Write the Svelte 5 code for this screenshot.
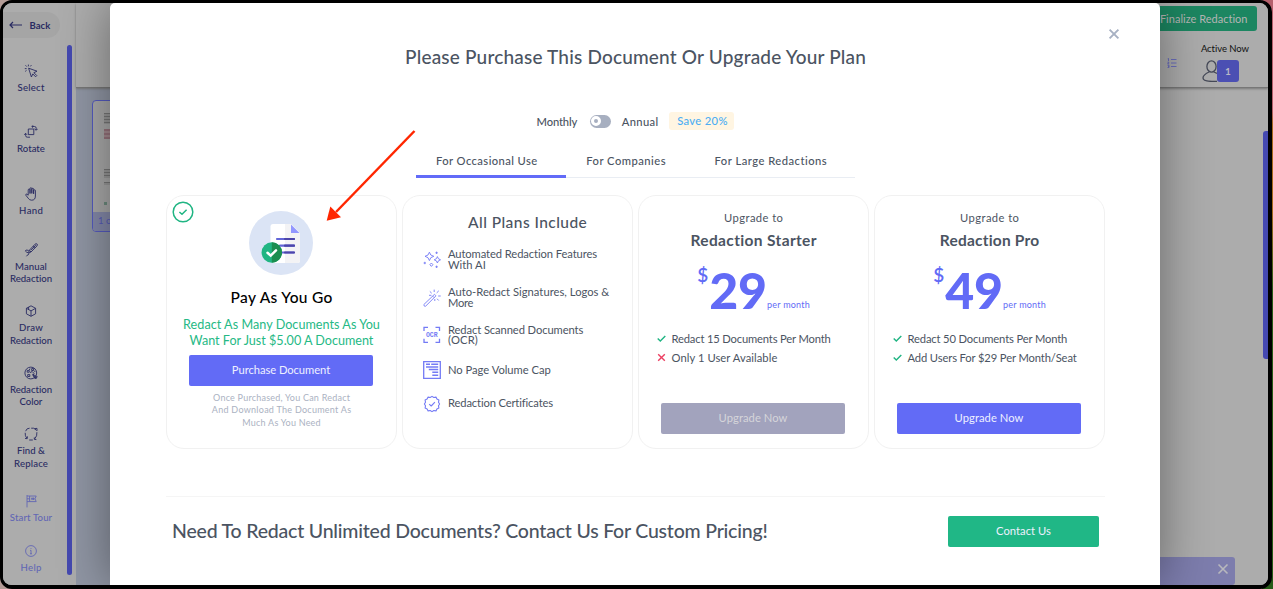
<script>
  // Tracks a label so that its text spans the given width.
  function fit(node, width) {
    const natural = node.getBoundingClientRect().width;
    const spacing = (width + 0.8 - natural) / (node.textContent.length - 1);
    node.style.letterSpacing = `${spacing}px`;
    node.style.marginRight = `${-spacing}px`;
  }

  const tools = [
    { icon: 'select', lines: [['Select', 26]] },
    { icon: 'rotate', lines: [['Rotate', 27]] },
    { icon: 'hand', lines: [['Hand', 23]] },
    { icon: 'manual', lines: [['Manual', 31], ['Redaction', 41.5]] },
    { icon: 'draw', lines: [['Draw', 23], ['Redaction', 41.5]] },
    { icon: 'color', lines: [['Redaction', 41.5], ['Color', 22]] },
    { icon: 'find', lines: [['Find &', 27], ['Replace', 33]] },
    { icon: 'tour', lines: [['Start Tour', 41.5]], soft: true },
    { icon: 'help', lines: [['Help', 20]], soft: true }
  ];

  const tabs = [
    { label: 'For Occasional Use', w: 100.5, active: true },
    { label: 'For Companies', w: 78.5 },
    { label: 'For Large Redactions', w: 111.5 }
  ];

  const features = [
    { icon: 'sparkles', lines: [['Automated Redaction Features', 148.5], ['With AI', 37]] },
    { icon: 'wand', lines: [['Auto-Redact Signatures, Logos &', 160.5], ['More', 24.5]] },
    { icon: 'ocr', lines: [['Redact Scanned Documents', 134.5], ['(OCR)', 29]] },
    { icon: 'page', lines: [['No Page Volume Cap', 102]] },
    { icon: 'seal', lines: [['Redaction Certificates', 104.5]] }
  ];

  const plans = [
    {
      name: 'Redaction Starter', w: 125.5, price: '29', disabled: true,
      points: [['Redact 15 Documents Per Month', 158.5, true], ['Only 1 User Available', 105, false]]
    },
    {
      name: 'Redaction Pro', w: 99, price: '49', disabled: false,
      points: [['Redact 50 Documents Per Month', 159, true], ['Add Users For $29 Per Month/Seat', 168.5, true]]
    }
  ];
</script>

{#snippet t(text, w)}<span class="t" use:fit={w}>{text}</span>{/snippet}

{#snippet toolIcon(name)}
  <svg class="tool-icon" viewBox="0 0 14 14">
    {#if name === 'select'}
      <path d="M4.6 4.2 L13 7.2 L9.9 8.7 L12.8 11.6 L11.6 12.8 L8.8 9.9 L7.4 13 Z" /><path d="M4.4 .6 V2.3 M.8 4.6 H2.6 M1.5 1.3 L2.8 2.6 M7.4 1.1 L6.4 2.4 M1.2 7.4 L2.5 6.4" />
    {:else if name === 'rotate'}
      <path d="M4.3 4 H9.8 V9.6 H4.3 Z M8 1.5 H10.5 Q12.2 1.5 12.2 3.2 V5 M10.6 3.8 L12.2 5.3 L13.7 3.8 M9 .3 L7.8 1.5 L9 2.7 M6 12.2 H3.3 Q1.6 12.2 1.6 10.5 V8.5 M.2 9.8 L1.6 8.3 L3 9.8" />
    {:else if name === 'hand'}
      <path d="M4.2 8.2 V3 Q4.2 2 5.1 2 Q6 2 6 3 V6.5 V1.7 Q6 .7 6.9 .7 Q7.8 .7 7.8 1.7 V6.4 V2.2 Q7.8 1.3 8.7 1.3 Q9.6 1.3 9.6 2.2 V6.8 V3.7 Q9.6 2.8 10.5 2.8 Q11.4 2.8 11.4 3.7 V9 Q11.4 13.2 7.6 13.2 Q5.4 13.2 4.2 11.2 L1.8 8.2 Q1.5 6.9 2.8 7.1 Z" />
    {:else if name === 'manual'}
      <path d="M5.2 7.4 L11 1.2 Q12.3 .3 13.1 1 Q13.7 1.8 12.9 3 L7 9 L4.6 9.6 Z M9.3 3 L11.2 4.9 M6.8 7.3 L11.8 2.2 M5.2 7.4 L7 9 M4.6 7.4 Q1.2 6.3 1.4 8.1 Q1.8 9 4.3 9.8 Q5.9 11 4.2 11.8 Q2.8 12.1 2.4 13.3" />
    {:else if name === 'draw'}
      <path d="M7 1.8 L11.6 4.3 V9.8 L7 12.3 L2.4 9.8 V4.3 Z M2.4 4.3 L7 6.9 L11.6 4.3 M7 6.9 V12.2 M4.6 3 V5.5" />
    {:else if name === 'color'}
      <circle cx="6.8" cy="7" r="5.9" /><path d="M3.2 4.4 H5.2 V6.2 H3.2 Z M7.7 2.6 H9.6 V4.5 H7.7 Z M3.7 8.6 H5.8 V10.5 H3.7 Z M6 6.6 L8.2 5.5 L10 7.4 L9.2 9.5 L12.7 12.5 M8.6 8.4 L13.4 10.8 L11 12.8 Z M6 2.5 L5.3 4 M10.8 4.7 V6" />
    {:else if name === 'find'}
      <path d="M5.6 1.2 Q2.6 1 1.6 4.2 M1.2 5.8 Q.9 9 2.8 11.2 M1 11.4 L3.2 11.7 L3.5 9.4 M5.2 13 H8.8 M7.2 1.2 H9.5 Q11 1.6 12.5 3.6 M10.6 1.6 L13 1.4 V3.8 M12.9 5.2 Q13.4 9 10.6 12 M12.4 12.6 L10.3 12.4 V10.4" />
    {:else if name === 'tour'}
      <path d="M3 1 V13.4 M3 2 H12.2 L11 4.8 L12.2 7.6 H3 M5.6 2 V7.6 M8.1 3.5 V6 M9.6 3.5 V6 M3 4.8 H5.6 M7 4.8 H10.6" />
    {:else}
      <circle cx="7" cy="7" r="5.4" /><path d="M7 6.3 V9.8 M7 4 V4.8 M6.1 6.4 H7 M6 9.8 H8" />
    {/if}
  </svg>
{/snippet}

{#snippet featureIcon(name)}
  <svg class="feature-icon" viewBox="0 0 18 18">
    {#if name === 'sparkles'}
      <path d="M6.4 1.2 Q7 4.8 10.8 5.3 Q7 5.9 6.4 9.6 Q5.8 5.9 2 5.3 Q5.8 4.8 6.4 1.2 Z M14.4 5.6 Q14.8 8.2 17.5 8.8 Q14.8 9.3 14.4 12 Q14 9.3 11.2 8.8 Q14 8.2 14.4 5.6 Z M8.4 12 L9.9 13.7 L8.4 15.4 L6.9 13.7 Z M13.6 .6 V3 M12.4 1.8 H14.8 M1.8 10.8 V13.2 M.6 12 H3 M13.6 14.6 V17 M12.4 15.8 H14.8" />
    {:else if name === 'wand'}
      <path d="M.8 15.6 L11.5 5.3 L13 6.8 L2.6 17.2 Q1.1 17.9 .8 15.6 Z M9.6 7.1 L11.1 8.6 M11.2 .6 V3 M6.8 2.4 L8.7 4.2 M6 6.3 H8.4 M15.8 1.8 L13.7 3.9 M15.2 7 H17.7 M14 9.7 L15.7 11.5 M11.8 10 V12" />
    {:else if name === 'ocr'}
      <path d="M1 5 V1.4 H5 M12.5 1.4 H16.5 V5 M16.5 12.8 V16.4 H12.5 M5 16.4 H1 V12.8" stroke-width="1.3" />
      <text x="8.8" y="11.3" text-anchor="middle">OCR</text>
    {:else if name === 'page'}
      <path d="M.7 .7 H17.3 V17.3 H.7 Z" stroke-width="1.3" /><path d="M3 3.3 H7 M8.2 3.3 H15.2 M3 6 H15.2 M5.8 8.6 H15.2 M9.3 11.3 H15.2 M9.3 14.2 H15.2" stroke-width="1.5" />
    {:else}
      <path d="M9 1.4 L10.8 2.5 L13 2.1 L13.9 4.1 L15.9 5.1 L15.5 7.2 L16.6 9 L15.5 10.8 L15.9 13 L13.9 13.9 L13 15.9 L10.8 15.5 L9 16.6 L7.2 15.5 L5.1 15.9 L4.1 13.9 L2.1 13 L2.5 10.8 L1.4 9 L2.5 7.2 L2.1 5.1 L4.1 4.1 L5.1 2.1 L7.2 2.5 Z M6.2 9.2 L8.2 11 L11.9 7.2" stroke-width="1.1" stroke-linejoin="round" />
    {/if}
  </svg>
{/snippet}

<div class="desktop">
  <div class="window">
    <aside class="sidebar">
      <div class="back">
        <svg width="14" height="8" viewBox="0 0 14 8"><path d="M13 4 H1 M4 1 L1 4 L4 7" /></svg>
        {@render t('Back', 20)}
      </div>
      <div class="tools">
        {#each tools as tool}
          <div class="tool {tool.icon}" class:soft={tool.soft}>
            {@render toolIcon(tool.icon)}
            {#each tool.lines as [text, w]}
              <div class="tool-line">{@render t(text, w)}</div>
            {/each}
          </div>
        {/each}
      </div>
      <div class="side-scroll"></div>
    </aside>

    <main class="main">
      <header class="topbar">
        <div class="finalize">{@render t('Finalize Redaction', 87)}</div>
        <div class="status">
          <svg class="list" width="10" height="10" viewBox="0 0 10 10"><path d="M4 1.5 H9.5 M4 5 H9.5 M4 8.5 H9.5 M1.5 .3 V3 M.7 .8 H1.5 M.5 4.2 H2 L.7 5.8 H2.2 M.5 7.2 H2 V9.6 H.5 M1 8.4 H2" /></svg>
          <div class="active-now">
            <div>{@render t('Active Now', 47.5)}</div>
            <div class="users">
              <svg width="15" height="22" viewBox="0 0 15 22"><ellipse cx="9.5" cy="6.5" rx="4.6" ry="5.7" /><path d="M7 12 Q1 14.8 1 18 Q1 21.4 10 21.4 H15 M12 12 L15 13.5" /></svg>
              <span class="badge">1</span>
            </div>
          </div>
        </div>
      </header>
      <section class="canvas">
        <div class="strip">
          <div class="thumb">
            <div class="thumb-page">
              <i class="ink a"></i><i class="ink b"></i><i class="ink c"></i><i class="ink d"></i><i class="ink e"></i>
            </div>
            <div class="thumb-label">1 of 1</div>
          </div>
        </div>
        <div class="pages">
          <div class="page-scroll"></div>
          <div class="toast">
            <svg width="12" height="12" viewBox="0 0 12 12"><path d="M1.5 1.5 L10.5 10.5 M10.5 1.5 L1.5 10.5" /></svg>
          </div>
        </div>
      </section>
    </main>

    <div class="modal">
      <svg class="close" width="12" height="12" viewBox="0 0 12 12"><path d="M1.6 1.6 L10.4 10.4 M10.4 1.6 L1.6 10.4" /></svg>
      <h1>{@render t('Please Purchase This Document Or Upgrade Your Plan', 460)}</h1>

      <div class="billing">
        {@render t('Monthly', 40)}
        <span class="switch"><span class="knob"></span></span>
        {@render t('Annual', 35.5)}
        <span class="save">{@render t('Save 20%', 49.5)}</span>
      </div>

      <nav class="tabs">
        {#each tabs as tab}
          <div class="tab" class:active={tab.active}>{@render t(tab.label, tab.w)}</div>
        {/each}
      </nav>

      <div class="cards">
        <div class="card payg">
          <svg class="picked" width="22" height="22" viewBox="0 0 22 22"><circle cx="11" cy="11" r="9.8" /><path d="M7.4 11 L10 13.3 L14.6 8.8" /></svg>
          <svg class="doc" width="64" height="64" viewBox="0 0 64 64">
            <circle cx="32" cy="32" r="32" fill="#dbe4f5" />
            <path d="M24 13 H42 L51 22 V49.5 Q51 52 48.5 52 H24 Q21.5 52 21.5 49.5 V15.5 Q21.5 13 24 13 Z" fill="#fff" />
            <path d="M36 13 H42 L51 22 V49.5 Q51 52 48.5 52 H36 Z" fill="#f3f3f5" />
            <path d="M42 13.5 L50.5 22 H42 Z" fill="#9297ff" />
            <path d="M28 28 H45 M31 34.7 H45 M31 41.5 H45" stroke="#6366d8" stroke-width="2.2" stroke-linecap="round" />
            <path d="M36 28 H45 M36 34.7 H45 M36 41.5 H45" stroke="#4c45aa" stroke-width="2.2" stroke-linecap="round" />
            <circle cx="22.8" cy="41.5" r="10.2" fill="#20b583" />
            <path d="M22.8 31.3 A10.2 10.2 0 0 1 22.8 51.7 Z" fill="#1b8e50" />
            <path d="M18.5 41.8 L21.7 44.6 L27 39.3" fill="none" stroke="#fff" stroke-width="2.5" stroke-linecap="round" />
          </svg>
          <h2>{@render t('Pay As You Go', 101)}</h2>
          <div class="pitch">
            <div>{@render t('Redact As Many Documents As You', 196)}</div>
            <div>{@render t('Want For Just $5.00 A Document', 183)}</div>
          </div>
          <div class="btn">{@render t('Purchase Document', 97.5)}</div>
          <div class="note">
            <div>{@render t('Once Purchased, You Can Redact', 136)}</div>
            <div>{@render t('And Download The Document As', 138.5)}</div>
            <div>{@render t('Much As You Need', 77.5)}</div>
          </div>
        </div>

        <div class="card includes">
          <h3>{@render t('All Plans Include', 118)}</h3>
          {#each features as f}
            <div class="feature" class:single={f.lines.length === 1}>
              {@render featureIcon(f.icon)}
              <div>
                {#each f.lines as [text, w]}<div class="feature-line">{@render t(text, w)}</div>{/each}
              </div>
            </div>
          {/each}
        </div>

        {#each plans as plan}
          <div class="card plan">
            <div class="to">{@render t('Upgrade to', 58)}</div>
            <h4>{@render t(plan.name, plan.w)}</h4>
            <div class="price">
              <span class="dollar">$</span><span class="amount">{@render t(plan.price, 57)}</span><span class="per">{@render t('per month', 42)}</span>
            </div>
            <div class="points">
              {#each plan.points as [text, w, ok]}
                <div class="point">
                  <svg width="9" height="9" viewBox="0 0 9 9" class:no={!ok}>
                    {#if ok}<path d="M.7 4.5 L3.3 7.1 L8.3 2" />{:else}<path d="M1.2 1.2 L7.8 7.8 M7.8 1.2 L1.2 7.8" />{/if}
                  </svg>
                  {@render t(text, w)}
                </div>
              {/each}
            </div>
            <div class="btn" class:disabled={plan.disabled}>{@render t('Upgrade Now', 68)}</div>
          </div>
        {/each}
      </div>

      <footer>
        <div class="contact">{@render t('Need To Redact Unlimited Documents? Contact Us For Custom Pricing!', 595)}</div>
        <div class="btn green">{@render t('Contact Us', 54)}</div>
      </footer>
    </div>

    <svg class="arrow" width="92" height="94" viewBox="0 0 92 94">
      <path d="M89.5 2 L11 83" stroke="#ff2600" stroke-width="2.5" />
      <path d="M1.7 91.7 L5.3 77.5 L16 88.3 Z" fill="#ff2600" />
    </svg>
  </div>
</div>

<style>
  :global(body) { margin: 0; overflow: hidden; }
  * { box-sizing: border-box; }
  .desktop {
    width: 1273px; height: 589px;
    background: linear-gradient(90deg, #b39b96 0 1262px, transparent 1262px),
      linear-gradient(#b5606c 0 110px, #a86a1c 125px 210px, #265b17 290px);
    font-family: Lato, "Noto Sans", sans-serif;
    font-size: 11.2px;
    color: #4b5462;
  }
  .window {
    position: relative;
    display: flex;
    width: 1272px; height: 589px;
    border: solid #000; border-width: 3px 4px 4px 3px;
    border-radius: 12px;
    overflow: hidden;
    background: #aaa;
  }
  svg { display: block; fill: none; flex: none; }
  .t { display: inline-block; white-space: nowrap; }
  h1, h2, h3, h4 { margin: 0; font-weight: 500; }

  .sidebar { display: grid; grid-template: 42px 1fr / 56px 1fr; width: 73px; background: #acacac; color: #292b62; }
  .back { grid-column: 1 / 3; display: flex; align-items: center; gap: 7px; width: 57px; height: 26px; margin-top: 9px; padding-left: 5.5px; border-radius: 0 13px 13px 0; background: #a5a5a5; font-size: 9.5px; font-weight: 700; }
  .back svg { stroke: #292b62; stroke-width: 1.2; }
  .tools { padding-top: 18.5px; }
  .tool { height: 61.6px; display: flex; flex-direction: column; align-items: center; font-size: 9.6px; font-weight: 500; line-height: 12.3px; }
  .tool.hand { height: 56px; }
  .tool.find { height: 66.8px; }
  .tool.soft { height: 50px; color: #6267b4; }
  .tool-icon { width: 14px; height: 14px; margin-bottom: 4px; stroke: currentColor; stroke-width: .9; }
  .side-scroll { width: 5px; height: 530px; margin-left: 8px; border-radius: 3px; background: #4549b0; }

  .main { flex: 1; display: flex; flex-direction: column; }
  .topbar { height: 85px; display: flex; flex-direction: column; align-items: flex-end; border-bottom: 1.5px solid #777; background: #acacac; box-shadow: 0 1px 2px #777; z-index: 1; }
  .finalize { width: 110px; height: 25px; margin: 3px 11px 0 0; padding-right: 9.5px; border-radius: 3px; background: #1c8661; color: #b5b5b5; font-size: 11px; line-height: 25px; text-align: right; }
  .status { display: flex; gap: 24px; margin: 12px 19px 0 0; }
  .list { margin-top: 15px; stroke: #6367bd; stroke-width: .9; }
  .active-now { color: #111; font-size: 9.5px; line-height: 12px; }
  .users { display: flex; margin-top: 5px; padding-left: 1.5px; }
  .users svg { margin-right: -.5px; stroke: #454957; stroke-width: 1.3; }
  .badge { width: 22px; height: 22px; border-radius: 3px; background: #4b4fb3; color: #b9b9c6; font-size: 10px; font-weight: 700; line-height: 22px; text-align: center; }
  .canvas { flex: 1; display: flex; }
  .strip { width: 400px; padding: 12px 0 0 16px; background: #9096a4; }
  .thumb { width: 110px; height: 132px; border: 1.5px solid #555bc0; border-radius: 4px; overflow: hidden; background: #aaa; }
  .thumb-page { height: 111px; padding: 12px 0 0 11px; }
  .ink { display: block; width: 12px; background: repeating-linear-gradient(#777 0 1px, #999 1px 3px); }
  .ink.a { height: 11px; }
  .ink.b { height: 10px; margin-top: 5px; background: repeating-linear-gradient(#96737c 0 2px, #a58b90 2px 4px); }
  .ink.c { height: 9px; margin-top: 30px; }
  .ink.d { height: 3px; margin-top: 4px; }
  .ink.e { width: 3px; height: 3px; margin-top: 17px; background: #6d8b7e; }
  .thumb-label { height: 20px; padding-left: 5px; background: #858aaa; color: #565bb9; font-size: 9.5px; line-height: 18px; }
  .pages { flex: 1; display: flex; flex-direction: column; align-items: flex-end; justify-content: space-between; padding-top: 43px; background: #acacac; }
  .page-scroll { width: 5px; height: 228px; border-radius: 3px 0 0 3px; background: #4549b0; }
  .toast { display: flex; align-items: center; justify-content: flex-end; width: 160px; height: 28px; margin-right: 33px; padding: 0 6px 4px 0; border-radius: 3px; background: #7d7dad; }
  .toast svg { stroke: #b8b8bd; stroke-width: 1.6; }

  .modal { position: absolute; z-index: 2; left: 107px; top: 0; width: 1050px; height: 582px; padding: 40px 55px 0 56px; display: flex; flex-direction: column; align-items: center; background: #fff; border-radius: 5px 5px 0 0; box-shadow: 0 0 50px rgba(0, 0, 0, .42); }
  .close { position: absolute; right: 40px; top: 25px; stroke: #a7b1c3; stroke-width: 1.9; }
  h1 { height: 28px; font-size: 19px; line-height: 28px; }
  .billing { display: flex; align-items: center; height: 18px; margin-top: 41px; font-weight: 500; }
  .switch { width: 21px; height: 13px; margin: 0 11px 0 12.5px; padding: 1.5px; border-radius: 7px; background: #a7afc0; }
  .knob { display: block; width: 10px; height: 10px; border: 3px solid #fff; border-radius: 50%; }
  .save { height: 18px; margin-left: 11px; padding: 0 7px 0 8px; border-radius: 3px; background: #fff5e2; color: #4badf3; line-height: 18px; }
  .tabs { display: flex; height: 35px; margin-top: 13px; border-bottom: 1px solid #e9edf3; font-weight: 500; line-height: 35px; }
  .tab { padding: 0 28.7px 0 20.3px; height: 35px; }
  .tab.active { border-bottom: 3.5px solid #626bf8; }
  .cards { display: grid; grid-template-columns: repeat(4, 1fr); gap: 5px; width: 939px; height: 254px; margin-top: 17px; }
  .card { position: relative; border: 1px solid #f1f1f1; border-radius: 18px; display: flex; flex-direction: column; align-items: center; }
  .btn { width: 184px; height: 31px; border-radius: 2px; background: #626bf6; color: #eef0ff; line-height: 30px; text-align: center; }
  .btn.disabled { background: #a2a3bd; color: #d5d5da; }

  .picked { position: absolute; left: 5px; top: 5px; stroke: #20b583; stroke-width: 1.5; }
  .doc { margin: 15px 2px 0 0; }
  h2 { margin-top: 12px; color: #000; font-size: 15.5px; line-height: 20px; }
  .pitch { margin-top: 10px; color: #25b985; font-size: 12.6px; line-height: 16px; text-align: center; }
  .payg .btn { margin: 6px 1px 0 0; }
  .note { margin-top: 5.5px; color: #abb2c2; font-size: 9px; line-height: 12.8px; text-align: center; }

  .includes { align-items: flex-start; padding-left: 20px; }
  h3 { margin: 16px 0 16px 45px; font-size: 15.5px; line-height: 21px; }
  .feature { display: flex; align-items: center; gap: 7px; height: 22px; margin-bottom: 15.6px; }
  .feature.single { height: 18px; margin: -.5px 0 16px; }
  .feature-icon { width: 18px; height: 18px; stroke: #747bf5; stroke-width: .9; }
  .feature-icon text { fill: #747bf5; stroke: none; font: 700 6.5px "Liberation Mono", monospace; }
  .feature-line { height: 10.7px; line-height: 10.7px; }

  .to { margin-top: 14px; line-height: 15px; }
  h4 { margin-top: 5px; font-size: 15.5px; font-weight: 700; line-height: 21px; }
  .price { display: flex; align-items: flex-start; height: 50px; margin-top: 11px; color: #626bf6; }
  .dollar { margin-right: 1px; font-size: 19px; font-weight: 600; line-height: 26px; }
  .amount { font-size: 50px; font-weight: 900; line-height: 56px; }
  .per { margin-top: 37px; font-size: 9px; line-height: 12px; }
  .points { align-self: stretch; margin-top: 17.5px; padding-left: 18px; }
  .point { display: flex; align-items: center; gap: 5.5px; height: 18.5px; }
  .point svg { stroke: #20b583; stroke-width: 1.4; }
  .point .no { stroke: #ec3f61; }
  .plan .btn { margin: 36px 1px 0 0; }

  footer { display: flex; justify-content: space-between; width: 939px; margin-top: 47px; padding: 19px 6px 0; border-top: 1px solid #f5f5f5; }
  .contact { font-size: 19.5px; font-weight: 500; line-height: 30px; }
  .btn.green { width: 151px; background: #20b786; }
  .arrow { position: absolute; z-index: 3; left: 322px; top: 126px; }
</style>
